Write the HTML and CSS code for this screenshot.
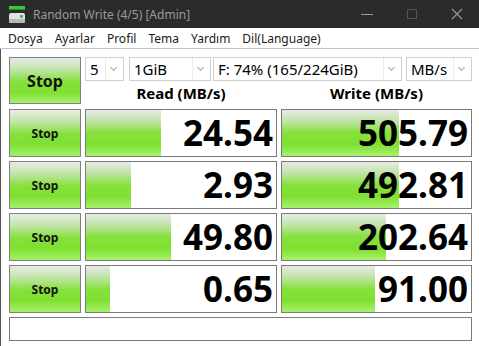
FILE: index.html
```html
<!DOCTYPE html>
<html lang="tr">
<head>
    <meta charset="UTF-8">
    <title>Random Write (4/5) [Admin]</title>
    <link rel="stylesheet" href="styles.css">
</head>
<body>

    <!-- Title bar -->
    <div class="titlebar">
        <svg class="app-icon" width="18" height="18" viewBox="0 0 18 18">
            <rect x="1" y="0" width="16" height="4" fill="#3cc43c"/>
            <rect x="1" y="3" width="16" height="1" fill="#229a22"/>
            <rect x="1" y="7" width="16" height="10" rx="2" fill="#e2e2e2"/>
            <rect x="1" y="13" width="16" height="4" rx="1" fill="#b9b9b9"/>
            <rect x="12" y="9" width="3" height="3" fill="#3cc43c"/>
        </svg>
        <span class="title">Random Write (4/5) [Admin]</span>
        <div class="winctl">
            <svg width="12" height="12" viewBox="0 0 12 12"><line x1="0" y1="6.5" x2="12" y2="6.5" stroke="#9a9a9a"/></svg>
            <svg width="12" height="12" viewBox="0 0 12 12"><rect x="1.5" y="1.5" width="9" height="9" fill="none" stroke="#555"/></svg>
            <svg width="12" height="12" viewBox="0 0 12 12"><path d="M1 1 L11 11 M11 1 L1 11" stroke="#9a9a9a" stroke-width="1.1"/></svg>
        </div>
    </div>

    <!-- Menu -->
    <nav class="menubar">
        <a>Dosya</a>
        <a>Ayarlar</a>
        <a>Profil</a>
        <a>Tema</a>
        <a>Yardım</a>
        <a>Dil(Language)</a>
    </nav>

    <main class="bench">
        <button class="stop big">Stop</button>
        <div class="controls">
            <div class="combos">
                <div class="combo c-count"><span>5</span><i></i></div>
                <div class="combo c-size"><span>1GiB</span><i></i></div>
                <div class="combo c-drive"><span>F: 74% (165/224GiB)</span><i></i></div>
                <div class="combo c-unit"><span>MB/s</span><i></i></div>
            </div>
            <div class="heads">
                <div class="head">Read (MB/s)</div>
                <div class="head">Write (MB/s)</div>
            </div>
        </div>

        <button class="stop">Stop</button>
        <div class="meter" style="background-size: 75px 100%">24.54</div>
        <div class="meter" style="background-size: 117px 100%">505.79</div>

        <button class="stop">Stop</button>
        <div class="meter" style="background-size: 45px 100%">2.93</div>
        <div class="meter" style="background-size: 117px 100%">492.81</div>

        <button class="stop">Stop</button>
        <div class="meter" style="background-size: 85px 100%">49.80</div>
        <div class="meter" style="background-size: 104px 100%">202.64</div>

        <button class="stop">Stop</button>
        <div class="meter" style="background-size: 24px 100%">0.65</div>
        <div class="meter" style="background-size: 93px 100%">91.00</div>

        <div class="status"></div>
    </main>

</body>
</html>
```

FILE: styles.css
```css
body {
    margin: 0;
    font-family: "Noto Sans", "Open Sans", sans-serif;
    background: #ffffff;
    color: #000;
}
.titlebar {
    height: 28px;
    background: #2b2b2b;
    display: flex;
    align-items: center;
    padding-left: 8px;
}
.app-icon {
    margin-right: 7px;
    margin-top: 1px;
}
.title {
    color: #9a9a9a;
    font-size: 12px;
    flex: 1;
}
.winctl {
    display: flex;
    gap: 33px;
    padding-right: 16px;
}
.menubar {
    height: 20px;
    display: flex;
    align-items: center;
    padding-left: 8px;
    gap: 12px;
    font-size: 12px;
    color: #1a1a1a;
    border-bottom: 1px solid #c4c4c4;
}
.bench {
    border-left: 1px solid #555;
    display: grid;
    grid-template-columns: 72px 192px 191px;
    grid-template-rows: 48px repeat(4, 48px) 24px;
    column-gap: 4px;
    row-gap: 4px;
    padding: 8px 7px 6px 8px;
}
.stop {
    margin: 0;
    padding: 0;
    border: 1px solid #808080;
    font-family: "Noto Sans", "Open Sans", sans-serif;
    font-weight: bold;
    font-size: 12px;
    color: #111;
    background: linear-gradient(to bottom, #e8ece6 0%, #c2e4aa 25%, #86e13c 52%, #7fe030 75%, #a6ef6c 100%);
}
.stop.big {
    font-size: 16px;
    height: 47px;
}
.controls {
    grid-column: 2 / 4;
    display: flex;
    flex-direction: column;
}
.combos {
    display: flex;
    height: 24px;
}
.combo {
    box-sizing: border-box;
    height: 24px;
    border: 1px solid #cfcfcf;
    display: flex;
    align-items: center;
    font-size: 15px;
    padding-left: 4px;
    position: relative;
}
.combo span {
    flex: 1;
}
.combo i {
    width: 17px;
    height: 22px;
    border-left: 1px solid #ececec;
    position: relative;
}
.combo i::after {
    content: "";
    position: absolute;
    left: 5px;
    top: 7px;
    width: 4px;
    height: 4px;
    border-right: 1px solid #a8a8a8;
    border-bottom: 1px solid #a8a8a8;
    transform: rotate(45deg);
}
.c-count { width: 39px; }
.c-size { width: 82px; margin-left: 5px; }
.c-drive { width: 189px; margin-left: 2px; }
.c-unit { width: 66px; margin-left: 4px; }
.heads {
    display: grid;
    grid-template-columns: 192px 191px;
    column-gap: 4px;
    margin-top: 1px;
}
.head {
    text-align: center;
    font-weight: bold;
    font-size: 15px;
    line-height: 22px;
}
.meter {
    box-sizing: border-box;
    border: 1px solid #7a7a7a;
    background-image: linear-gradient(to bottom, #e6ebe4 0%, #bfe3a5 25%, #86e13c 50%, #7ee030 75%, #a8f06e 100%);
    background-repeat: no-repeat;
    text-align: right;
    padding-right: 3px;
    font-weight: bold;
    font-size: 35px;
    line-height: 46px;
}
.status {
    grid-column: 1 / 4;
    border: 1px solid #7a7a7a;
}
```
